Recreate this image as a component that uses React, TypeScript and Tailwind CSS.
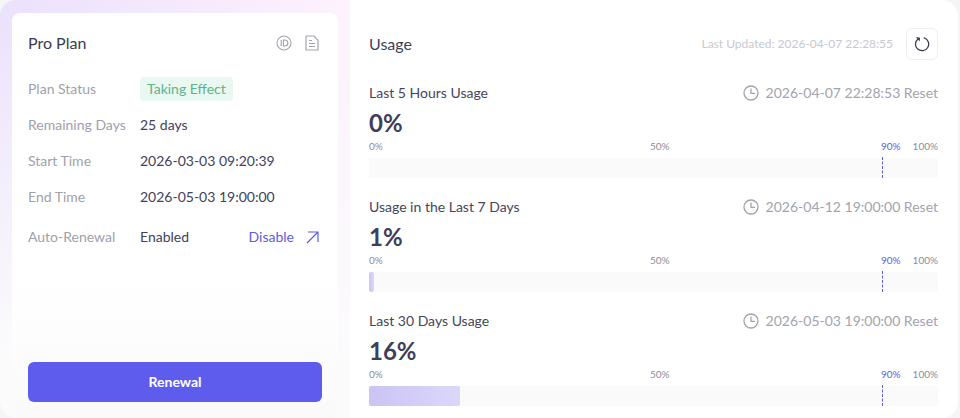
import React from "react";

function IdIcon() {
  return (
    <svg width="16" height="16" viewBox="0 0 16 16" fill="none" stroke="#a3a3ae" strokeWidth="1.1">
      <circle cx="8" cy="8" r="7" />
      <path d="M5.2 5v6" />
      <path d="M7.4 5h1.5a3 3 0 0 1 0 6H7.4z" />
    </svg>
  );
}
function DocIcon() {
  return (
    <svg width="14" height="16" viewBox="0 0 14 16" fill="none" stroke="#a3a3ae" strokeWidth="1.2" strokeLinejoin="round">
      <path d="M1 1.6c0-.4.3-.6.6-.6h7.2L13 5.2v9.2c0 .3-.3.6-.6.6H1.6a.6.6 0 0 1-.6-.6z" />
      <path d="M4 5.5h3M4 8.5h6M4 11.5h6" />
    </svg>
  );
}
function ClockIcon() {
  return (
    <svg width="16" height="16" viewBox="0 0 16 16" fill="none" stroke="#a3a3ae" strokeWidth="1.3">
      <circle cx="8" cy="8" r="7" />
      <path d="M8 3.6V8.4h4" />
    </svg>
  );
}
function RefreshIcon() {
  return (
    <svg width="16" height="16" viewBox="0 0 16 16" fill="none">
      <path d="M4 2.9A6.6 6.6 0 1 0 10.3 1.9" stroke="#3a3a50" strokeWidth="1.3" strokeLinecap="round" />
      <path d="M1.7 1.4h4.2v3.9z" fill="#3a3a50" transform="rotate(8 4 3)" />
    </svg>
  );
}
function ArrowIcon() {
  return (
    <svg width="13" height="13" viewBox="0 0 13 13" fill="none" stroke="#5d5ce0" strokeWidth="1.2">
      <path d="M2 1h10v10M12 1 1 12" />
    </svg>
  );
}

function Row({ label, children, className }: { label: string; children: React.ReactNode; className?: string }) {
  return (
    <div className={"flex items-center h-9 text-sm " + (className ?? "")}>
      <span className="w-[112px] text-[#a0a0ac]">{label}</span>
      {children}
    </div>
  );
}

function Usage({ title, reset, pct, width }: { title: string; reset: string; pct: string; width: number }) {
  return (
    <section className="h-[114px]">
      <div className="flex items-center justify-between h-5">
        <span className="text-sm text-[#45455c]">{title}</span>
        <span className="flex items-center gap-[7px] text-sm text-[#a3a3ae]">
          <ClockIcon />
          {reset}
        </span>
      </div>
      <div className="mt-[5px] h-[30px] leading-[30px] text-2xl font-bold text-[#3e3e5a]">{pct}</div>
      <div className="mt-[1px] flex h-[14px] items-center text-[10px] text-[#8c8c98]">
        <span className="w-[281px]">0%</span>
        <span className="w-[232px]">50%</span>
        <span className="-ml-px text-[#5d5ce0]">90%</span>
        <span className="ml-auto">100%</span>
      </div>
      <div className="relative mt-[5px] h-5 bg-[#fafafa] rounded-[2px]">
        {width > 0 && (
          <div
            className="h-full rounded-[2px] bg-gradient-to-r from-[#cbc4f4] to-[#dbd7fa]"
            style={{ width: `${width}px` }}
          />
        )}
        <div className="absolute top-[-1px] bottom-0 left-[513px] border-l border-dashed border-[#5d5ce0]" />
      </div>
    </section>
  );
}

export default function App() {
  return (
    <div
      className="flex h-[418px] w-[960px] overflow-hidden bg-[#f5f5f7] text-[#41415a]"
      style={{ fontFamily: '"Lato", "Liberation Sans", sans-serif' }}
    >
      <aside className="w-[350px] shrink-0 pl-3 pr-3 pt-[13px] rounded-l-2xl bg-[linear-gradient(180deg,transparent_0%,#fbfbfc_85%),linear-gradient(90deg,#ebe1fb,#fdf2fd)]">
        <div className="flex h-[405px] flex-col rounded-lg bg-gradient-to-b from-white via-white via-65% to-[#fafafb] px-4 pb-4">
          <header className="flex h-[58px] items-center justify-between pt-[2px]">
            <h2 className="text-base text-[#3a3a50]">Pro Plan</h2>
            <div className="mr-[3px] flex items-center gap-[13px]">
              <IdIcon />
              <DocIcon />
            </div>
          </header>
          <Row label="Plan Status">
            <span className="rounded bg-[#e9f8f0] px-[7px] h-6 leading-6 text-[#5fb38a]">Taking Effect</span>
          </Row>
          <Row label="Remaining Days">
            <span>25 days</span>
          </Row>
          <Row label="Start Time">
            <span>2026-03-03 09:20:39</span>
          </Row>
          <Row label="End Time">
            <span>2026-05-03 19:00:00</span>
          </Row>
          <Row label="Auto-Renewal" className="mt-1">
            <span>Enabled</span>
            <span className="ml-auto text-[#5d5ce0]">Disable</span>
            <span className="ml-[12px] mr-[3px]">
              <ArrowIcon />
            </span>
          </Row>
          <button className="mt-auto h-10 w-full rounded-md bg-[#5e5cec] text-sm font-bold text-white">Renewal</button>
        </div>
      </aside>
      <main className="w-[608px] shrink-0 rounded-r-2xl bg-white pl-[19px] pr-[20px] pt-7">
        <header className="flex h-8 items-center">
          <h2 className="text-base text-[#3f3f55]">Usage</h2>
          <span className="ml-auto text-xs text-[#c8c8d0]">Last Updated: 2026-04-07 22:28:55</span>
          <button className="ml-[13px] flex h-8 w-8 items-center justify-center rounded-md border border-[#ededf0]">
            <RefreshIcon />
          </button>
        </header>
        <div className="mt-[23px]">
          <Usage title="Last 5 Hours Usage" reset="2026-04-07 22:28:53 Reset" pct="0%" width={0} />
          <Usage title="Usage in the Last 7 Days" reset="2026-04-12 19:00:00 Reset" pct="1%" width={5} />
          <Usage title="Last 30 Days Usage" reset="2026-05-03 19:00:00 Reset" pct="16%" width={91} />
        </div>
      </main>
    </div>
  );
}
